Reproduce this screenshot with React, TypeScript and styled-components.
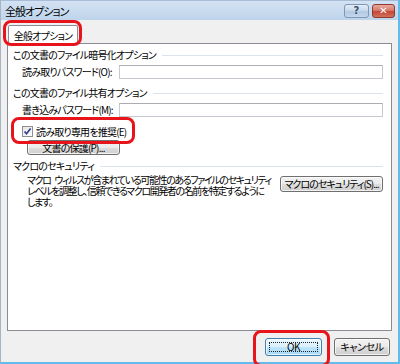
import React from 'react';
import styled, { createGlobalStyle } from 'styled-components';

const GlobalStyle = createGlobalStyle`
  html, body { margin: 0; padding: 0; background: #fff; }
  body {
    font-family: "Noto Sans CJK JP", "Noto Sans", sans-serif;
    font-size: 10px;
    font-feature-settings: "palt";
    letter-spacing: -0.8px;
    color: #000;
  }
`;

const Window = styled.div`
  width: 400px;
  height: 364px;
  box-sizing: border-box;
  background: #f0f0f0;
  border-left: 1px solid #a9b4c2;
  border-right: 2px solid #62bbe8;
  border-bottom: 2px solid #62bbe8;
  display: flex;
  flex-direction: column;
`;

const TitleBar = styled.div`
  height: 20px;
  flex: none;
  box-sizing: border-box;
  padding: 0 3px 0 4px;
  display: flex;
  align-items: center;
  justify-content: space-between;
  background: linear-gradient(#d3e2f3, #bed4eb);
  border-top: 1px solid #a7bcd6;
`;

const Title = styled.span`
  font-size: 11px;
  line-height: 12px;
  letter-spacing: -1px;
`;

const TitleButtons = styled.div`
  display: flex;
  gap: 3px;
  margin-top: 1px;
`;

const CaptionButton = styled.div<{ $close?: boolean }>`
  width: ${p => (p.$close ? 23 : 25)}px;
  height: 14px;
  box-sizing: border-box;
  border-radius: 3px;
  border: 1px solid ${p => (p.$close ? '#8e3a2f' : '#7d97b4')};
  background: ${p =>
    p.$close
      ? 'linear-gradient(#e9a99e, #d77a6c 45%, #c54733 55%, #d0725e)'
      : 'linear-gradient(#e2ecf7, #c9daec 45%, #b3c9e2 55%, #c4d8ee)'};
  display: flex;
  align-items: center;
  justify-content: center;
  color: ${p => (p.$close ? '#fff' : '#38506e')};
  font-family: "DejaVu Sans", sans-serif;
  font-size: 10px;
  font-weight: bold;
  letter-spacing: 0;
  line-height: 1;
`;

const Content = styled.div`
  flex: 1;
  display: flex;
  flex-direction: column;
  padding: 5px 6px 0 6px;
  min-height: 0;
`;

const Tabs = styled.div`
  display: flex;
  padding-left: 1px;
  position: relative;
  z-index: 1;
  margin-bottom: -1px;
`;

const Tab = styled.div`
  position: relative;
  width: 70px;
  height: 19px;
  box-sizing: border-box;
  border: 1px solid #898c95;
  border-bottom: none;
  border-radius: 2px 2px 0 0;
  background: #fff;
  display: flex;
  align-items: center;
  justify-content: center;
  padding-top: 1px;
`;

const Mark = styled.span<{ $t: number; $l: number; $r: number; $b: number }>`
  position: absolute;
  top: ${p => p.$t}px;
  left: ${p => p.$l}px;
  right: ${p => p.$r}px;
  bottom: ${p => p.$b}px;
  border: 3px solid #e8141c;
  border-radius: 8px;
  pointer-events: none;
  z-index: 5;
`;

const Panel = styled.div`
  flex: 1;
  background: #fff;
  border: 1px solid #898c95;
  padding: 5px 8px 0 5px;
  display: flex;
  flex-direction: column;
`;

const GroupHeader = styled.div<{ $gap: number }>`
  display: flex;
  align-items: center;
  height: 12px;
  line-height: 12px;
  margin-top: ${p => p.$gap}px;
  white-space: nowrap;
  &::after {
    content: '';
    flex: 1;
    height: 1px;
    background: #dde3ea;
    margin-left: 6px;
  }
`;

const FieldRow = styled.div<{ $gap: number }>`
  display: flex;
  align-items: center;
  margin-top: ${p => p.$gap}px;
  margin-left: 9px;
`;

const FieldLabel = styled.label`
  width: 97px;
  flex: none;
  white-space: nowrap;
`;

const TextBox = styled.div`
  flex: 1;
  height: 14px;
  box-sizing: border-box;
  background: #fff;
  border: 1px solid #c5c8ce;
  border-top-color: #abadb3;
`;

const CheckRow = styled.div`
  position: relative;
  align-self: flex-start;
  display: inline-flex;
  align-items: center;
  gap: 3px;
  margin: 8px 0 0 9px;
  height: 12px;
  white-space: nowrap;
`;

const Box = styled.span`
  width: 11px;
  height: 11px;
  box-sizing: border-box;
  border: 1px solid #8f8f8f;
  background: linear-gradient(135deg, #e6e6e6, #fcfcfc);
  display: flex;
  align-items: center;
  justify-content: center;
`;

const Button = styled.button<{ $w: number; $h?: number; $default?: boolean }>`
  position: relative;
  width: ${p => p.$w}px;
  height: ${p => p.$h ?? 18}px;
  box-sizing: border-box;
  padding: 0;
  font-family: inherit;
  font-size: 10px;
  font-feature-settings: "palt";
  letter-spacing: -0.8px;
  line-height: 1;
  color: #000;
  border-radius: 3px;
  border: 1px solid ${p => (p.$default ? '#3c7fb1' : '#707070')};
  background: ${p =>
    p.$default
      ? 'linear-gradient(#eaf6fd, #d9f0fc 50%, #bee6fd 51%, #a7d9f5)'
      : 'linear-gradient(#f2f2f2, #ebebeb 50%, #dddddd 51%, #cfcfcf)'};
  box-shadow: inset 0 0 0 1px rgba(255, 255, 255, 0.7);
  white-space: nowrap;
`;

const FocusRing = styled.span`
  position: absolute;
  inset: 3px;
  border: 1px dotted #222;
`;

const ProtectButton = styled(Button)`
  align-self: flex-start;
  margin: 3px 0 0 14px;
`;

const MacroRow = styled.div`
  display: flex;
  justify-content: space-between;
  align-items: flex-start;
  margin-left: 14px;
`;

const Paragraph = styled.p`
  margin: 2px 0 0 0;
  line-height: 11px;
  letter-spacing: -1.4px;
  word-spacing: 3px;
  white-space: nowrap;
`;

const MacroButton = styled(Button)`
  margin-top: 4px;
  letter-spacing: -1px;
`;

const Footer = styled.div`
  height: 31px;
  flex: none;
  box-sizing: border-box;
  padding: 7px 8px 0 0;
  display: flex;
  justify-content: flex-end;
  gap: 12px;
`;

const FooterButton = styled(Button)`
  letter-spacing: -0.4px;
`;

const Holder = styled.div`
  position: relative;
  display: flex;
`;

const Check = () => (
  <svg width="9" height="9" viewBox="0 0 9 9">
    <path d="M1.5 4.5 L3.5 6.8 L7.6 1.4" fill="none" stroke="#2d3c8f" strokeWidth="1.6" />
  </svg>
);

export default function App() {
  return (
    <>
      <GlobalStyle />
      <Window>
        <TitleBar>
          <Title>全般オプション</Title>
          <TitleButtons>
            <CaptionButton>?</CaptionButton>
            <CaptionButton $close>✕</CaptionButton>
          </TitleButtons>
        </TitleBar>
        <Content>
          <Tabs>
            <Tab>
              全般オプション
              <Mark $t={-6} $l={-6} $r={-5} $b={-2} />
            </Tab>
          </Tabs>
          <Panel>
            <GroupHeader $gap={0}>この文書のファイル暗号化オプション</GroupHeader>
            <FieldRow $gap={3}>
              <FieldLabel>読み取りパスワード(O):</FieldLabel>
              <TextBox />
            </FieldRow>
            <GroupHeader $gap={8}>この文書のファイル共有オプション</GroupHeader>
            <FieldRow $gap={3}>
              <FieldLabel>書き込みパスワード(M):</FieldLabel>
              <TextBox />
            </FieldRow>
            <CheckRow>
              <Box>
                <Check />
              </Box>
              読み取り専用を推奨(E)
              <Mark $t={-8} $l={-11} $r={-9} $b={-7} />
            </CheckRow>
            <ProtectButton $w={93} $h={15}>文書の保護(P)...</ProtectButton>
            <GroupHeader $gap={5}>マクロのセキュリティ</GroupHeader>
            <MacroRow>
              <Paragraph>
                マクロ ウィルスが含まれている可能性のあるファイルのセキュリティ
                <br />
                レベルを調整し、信頼できるマクロ開発者の名前を特定するように
                <br />
                します。
              </Paragraph>
              <MacroButton $w={103} $h={16}>マクロのセキュリティ(S)...</MacroButton>
            </MacroRow>
          </Panel>
        </Content>
        <Footer>
          <Holder>
            <FooterButton $w={57} $default>
              <FocusRing />
              OK
            </FooterButton>
            <Mark $t={-8} $l={-12} $r={-8} $b={-5} />
          </Holder>
          <FooterButton $w={56}>キャンセル</FooterButton>
        </Footer>
      </Window>
    </>
  );
}
